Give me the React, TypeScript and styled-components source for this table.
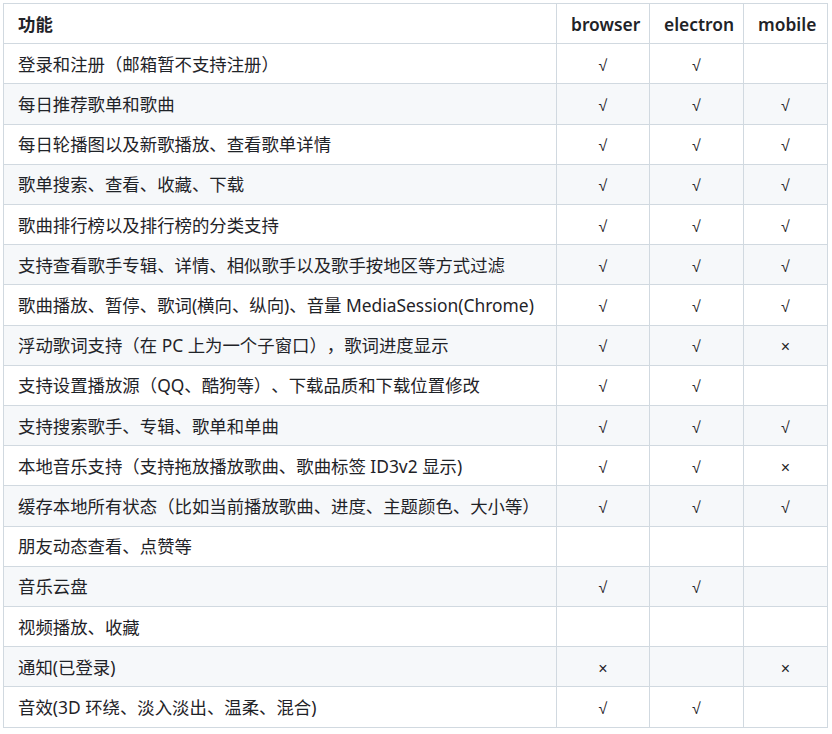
import React from "react";
import styled, { createGlobalStyle } from "styled-components";

const Global = createGlobalStyle`
  html, body { margin: 0; padding: 0; background: #ffffff; }
  body {
    font-family: "Noto Sans", "Noto Sans CJK SC", sans-serif;
    color: #1f2328;
  }
`;

const Page = styled.div`
  padding: 3px 5px 0 3px;
`;

const Table = styled.table`
  border-collapse: collapse;
  border-spacing: 0;
  width: 824px;
  table-layout: fixed;
  font-size: 17.4px;
  line-height: 26.2px;
  text-spacing-trim: space-all;
`;

const Th = styled.th<{ $w: number; $center?: boolean }>`
  box-sizing: border-box;
  width: ${(p) => p.$w}px;
  border: 1px solid #d1d9e0;
  padding: 6.5px 14px;
  font-weight: 600;
  text-align: ${(p) => (p.$center ? "center" : "left")};
  white-space: nowrap;
`;

const Row = styled.tr<{ $alt: boolean }>`
  background: ${(p) => (p.$alt ? "#f6f8fa" : "#ffffff")};
`;

const Td = styled.td<{ $center?: boolean }>`
  border: 1px solid #d1d9e0;
  padding: 6.5px 14px;
  height: 26.2px;
  text-align: ${(p) => (p.$center ? "center" : "left")};
  white-space: nowrap;
  overflow: hidden;
`;

const Mark = styled.span`
  display: inline-block;
  font-family: "Liberation Sans", sans-serif;
  font-size: 16px;
  line-height: 16px;
  height: 16px;
  vertical-align: baseline;
`;

type R = [string, string, string, string];

const rows: R[] = [
  ["登录和注册（邮箱暂不支持注册）", "√", "√", ""],
  ["每日推荐歌单和歌曲", "√", "√", "√"],
  ["每日轮播图以及新歌播放、查看歌单详情", "√", "√", "√"],
  ["歌单搜索、查看、收藏、下载", "√", "√", "√"],
  ["歌曲排行榜以及排行榜的分类支持", "√", "√", "√"],
  ["支持查看歌手专辑、详情、相似歌手以及歌手按地区等方式过滤", "√", "√", "√"],
  ["歌曲播放、暂停、歌词(横向、纵向)、音量 MediaSession(Chrome)", "√", "√", "√"],
  ["浮动歌词支持（在 PC 上为一个子窗口），歌词进度显示", "√", "√", "×"],
  ["支持设置播放源（QQ、酷狗等）、下载品质和下载位置修改", "√", "√", ""],
  ["支持搜索歌手、专辑、歌单和单曲", "√", "√", "√"],
  ["本地音乐支持（支持拖放播放歌曲、歌曲标签 ID3v2 显示)", "√", "√", "×"],
  ["缓存本地所有状态（比如当前播放歌曲、进度、主题颜色、大小等）", "√", "√", "√"],
  ["朋友动态查看、点赞等", "", "", ""],
  ["音乐云盘", "√", "√", ""],
  ["视频播放、收藏", "", "", ""],
  ["通知(已登录)", "×", "", "×"],
  ["音效(3D 环绕、淡入淡出、温柔、混合)", "√", "√", ""],
];

export default function App() {
  return (
    <Page>
      <Global />
      <Table>
        <thead>
          <tr>
            <Th $w={553}>功能</Th>
            <Th $w={93} $center>
              browser
            </Th>
            <Th $w={94} $center>
              electron
            </Th>
            <Th $w={84} $center>
              mobile
            </Th>
          </tr>
        </thead>
        <tbody>
          {rows.map((r, i) => (
            <Row key={i} $alt={i % 2 === 1}>
              <Td>{r[0]}</Td>
              <Td $center>{r[1] && <Mark>{r[1]}</Mark>}</Td>
              <Td $center>{r[2] && <Mark>{r[2]}</Mark>}</Td>
              <Td $center>{r[3] && <Mark>{r[3]}</Mark>}</Td>
            </Row>
          ))}
        </tbody>
      </Table>
    </Page>
  );
}
